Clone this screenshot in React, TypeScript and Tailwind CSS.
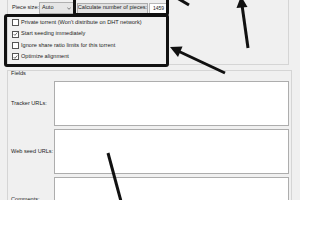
import React from "react";

function Check({ checked }: { checked?: boolean }) {
  return (
    <div className="w-[7px] h-[7px] border border-[#555] bg-white flex items-center justify-center shrink-0">
      {checked && (
        <svg width="6" height="6" viewBox="0 0 6 6">
          <path d="M0.8 3.1 L2.3 4.6 L5.2 1.2" fill="none" stroke="#222" strokeWidth="0.8" />
        </svg>
      )}
    </div>
  );
}

function Row({ checked, label }: { checked?: boolean; label: string }) {
  return (
    <div className="flex items-center h-[11.3px] gap-[2px] whitespace-nowrap">
      <Check checked={checked} />
      <span>{label}</span>
    </div>
  );
}

function FieldRow({ label }: { label: string }) {
  return (
    <div className="flex items-center h-[45px]">
      <div className="w-[43px] shrink-0 whitespace-nowrap">{label}</div>
      <div className="w-[235px] shrink-0 h-full bg-white border border-[#adadad]" />
    </div>
  );
}

export default function App() {
  return (
    <div className="relative w-[300px] h-[200px] overflow-hidden bg-[#f0f0f0] font-['Liberation_Sans',Arial,sans-serif] text-[5.6px] leading-none text-[#1e1e1e]">
      <div className="ml-[7px] w-[282px] h-[65px] border-x border-b border-[#d5d5d5] pl-[4px] pt-[2px]">
        <div className="flex items-center h-[12px] whitespace-nowrap">
          <span className="w-[27px] shrink-0">Piece size:</span>
          <div className="w-[36px] shrink-0 h-[12px] border border-[#b0b0b0] bg-[#e6e6e6] flex items-center justify-between pl-[2px] pr-[3px]">
            <span>Auto</span>
            <svg width="4" height="3" viewBox="0 0 4 3">
              <path d="M0.3 0.5 L2 2.3 L3.7 0.5" fill="none" stroke="#333" strokeWidth="0.6" />
            </svg>
          </div>
          <div className="ml-[2px] w-[71px] shrink-0 h-[11px] border border-[#adadad] bg-[#e1e1e1] flex items-center justify-center overflow-hidden">
            Calculate number of pieces:
          </div>
          <div className="ml-[1px] w-[18px] shrink-0 h-[11px] border border-[#b8b8b8] bg-white flex items-center pl-[3px] text-[5px]">
            1459
          </div>
        </div>
        <div className="mt-[3.3px] flex flex-col">
          <Row label="Private torrent (Won't distribute on DHT network)" />
          <Row checked label="Start seeding immediately" />
          <Row label="Ignore share ratio limits for this torrent" />
          <Row checked label="Optimize alignment" />
        </div>
      </div>

      <div className="mt-[5px] ml-[7px] w-[285px] h-[160px] border border-[#d5d5d5] pl-[3px] pr-[2px]">
        <div className="h-[6px] flex items-center">Fields</div>
        <div className="mt-[4px] flex flex-col gap-[3px]">
          <FieldRow label="Tracker URLs:" />
          <FieldRow label="Web seed URLs:" />
          <FieldRow label="Comments:" />
        </div>
      </div>

      <svg className="absolute inset-0 pointer-events-none" width="300" height="200" viewBox="0 0 300 200">
        <g fill="none" stroke="#111" strokeWidth="3" strokeLinejoin="round">
          <rect x="74.5" y="-6" width="93" height="20.5" rx="1.5" />
          <rect x="5.5" y="15.5" width="162" height="50" rx="1.5" />
        </g>
        <g stroke="#111" strokeWidth="3" strokeLinecap="butt">
          <line x1="172" y1="-5" x2="189" y2="5" />
          <line x1="248" y1="48" x2="242" y2="5" />
          <line x1="225" y1="73" x2="178" y2="51" />
          <line x1="108" y1="153" x2="122" y2="205" />
        </g>
        <g fill="#111">
          <polygon points="241,-4 247.5,7 236.5,8" />
          <polygon points="170,47 182.5,46.5 178,57" />
        </g>
      </svg>
    </div>
  );
}
